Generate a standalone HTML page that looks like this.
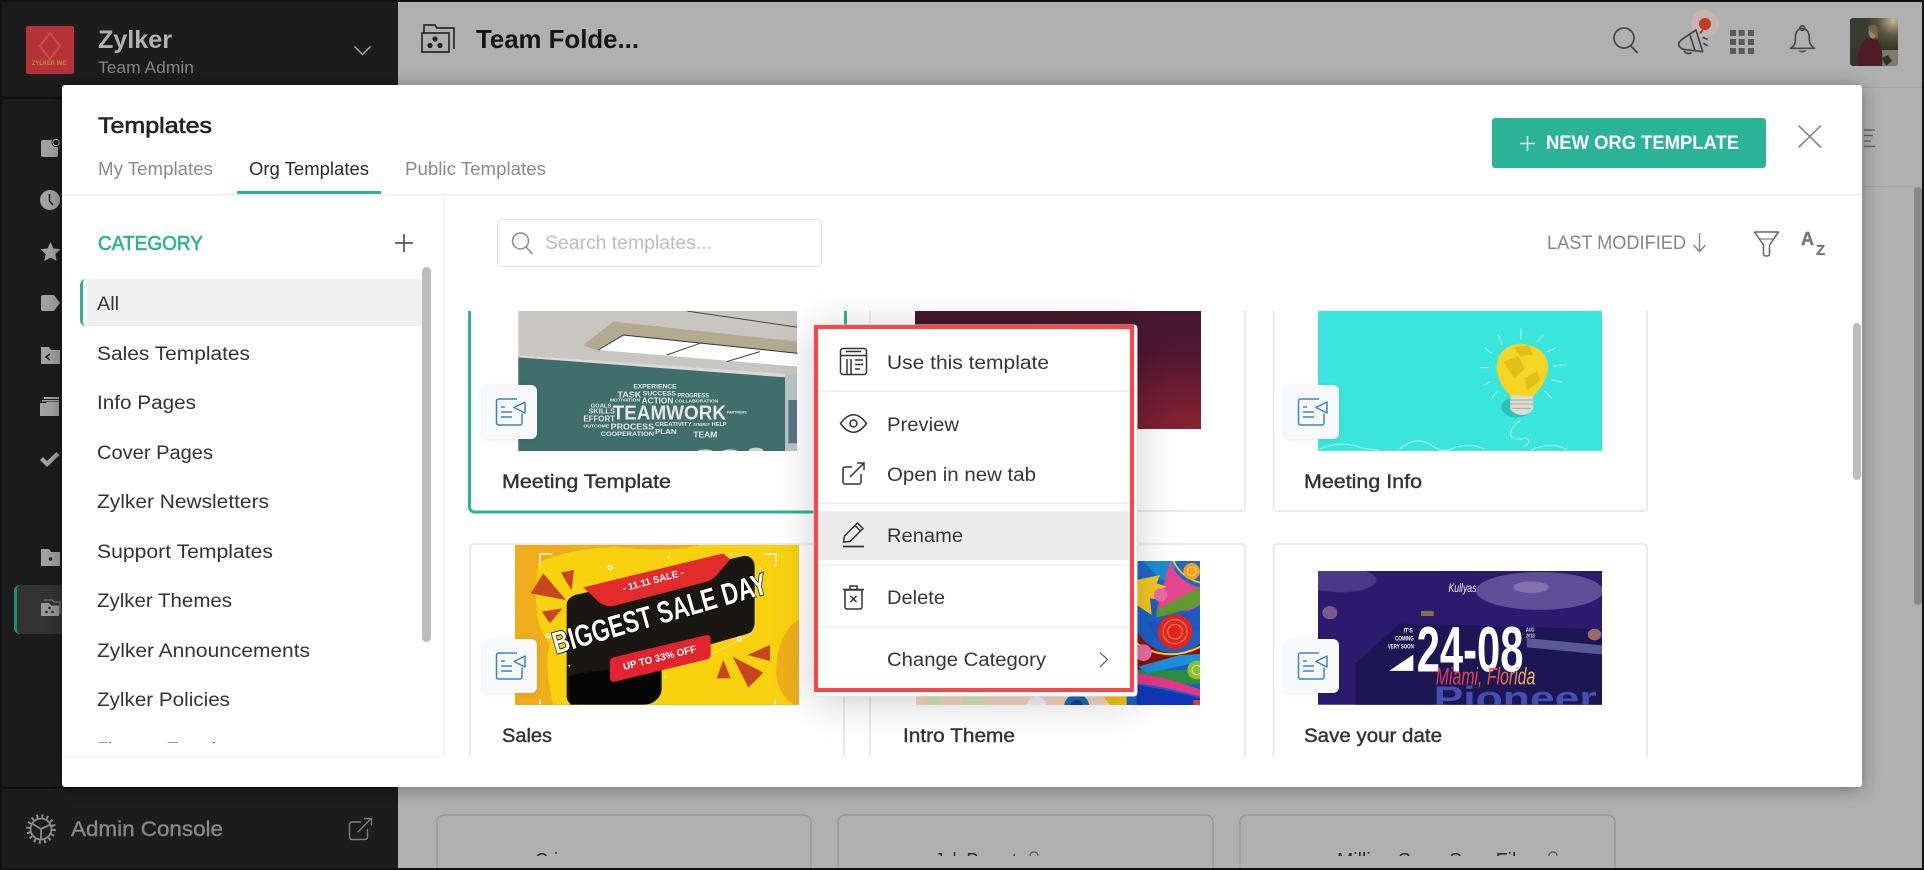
<!DOCTYPE html>
<html lang="en"><head><meta charset="utf-8"><title>Templates</title>
<style>
html,body{margin:0;padding:0;background:#b0b0b0;width:1924px;height:870px;overflow:hidden}
svg{display:block;position:absolute;left:0;top:0}
text{font-family:"Liberation Sans",sans-serif;white-space:pre}
.m{stroke-width:.6px}
.l{font-size:19.6px;fill:#333}
.i{font-size:19.6px;fill:#363636}
.c{font-size:19.6px;fill:#333;stroke:#333;stroke-width:.4px}
.w{fill:#e9e9e4;font-weight:bold}
</style></head><body>
<svg width="1924" height="870" viewBox="0 0 1924 870" xmlns="http://www.w3.org/2000/svg">
<defs>
<clipPath id="cg"><rect x="444" y="311" width="1408" height="446"/></clipPath>
<clipPath id="cb"><rect x="400" y="800" width="1500" height="56"/></clipPath>
<clipPath id="cl"><rect x="64" y="270" width="358" height="473"/></clipPath>
<clipPath id="i1"><rect x="518" y="311" width="279" height="140"/></clipPath>
<clipPath id="i2"><rect x="515" y="545" width="284" height="160"/></clipPath>
<clipPath id="i3"><rect x="1318" y="311" width="284" height="140"/></clipPath>
<clipPath id="i4"><rect x="1318" y="571" width="284" height="134"/></clipPath>
<clipPath id="i5"><rect x="916" y="561" width="284" height="144"/></clipPath>
<clipPath id="av"><rect x="1850" y="18" width="48" height="48" rx="3"/></clipPath>
<filter id="sm" x="-10%" y="-15%" width="120%" height="130%"><feDropShadow dx="0" dy="2" stdDeviation="9" flood-color="#000" flood-opacity=".35"/></filter>
<filter id="sb" x="-30%" y="-30%" width="160%" height="160%"><feDropShadow dx="0" dy="5" stdDeviation="20" flood-color="#000" flood-opacity=".2"/></filter>
<filter id="ss" x="-30%" y="-30%" width="160%" height="160%"><feDropShadow dx="0" dy="1" stdDeviation="3" flood-color="#000" flood-opacity=".08"/></filter>
<linearGradient id="gm" x1="0" x2="1" y1="0" y2="0"><stop offset="0" stop-color="#e8325a"/><stop offset=".6" stop-color="#e8504a"/><stop offset="1" stop-color="#eec86a"/></linearGradient>
<g id="tic">
<rect width="54" height="54" rx="6" fill="#f8f9fa" filter="url(#ss)"/>
<path d="M34 14H15.500a2 2 0 0 0-2 2V38a2 2 0 0 0 2 2H37a2 2 0 0 0 2-2V28.500" fill="none" stroke="#3d82c9" stroke-width="1.500"/>
<path d="M42 17L31 22.500L42 28Z" fill="none" stroke="#3d82c9" stroke-width="1.500" stroke-linejoin="round"/>
<path d="M18 22h4M18 27h11M18 32h11" fill="none" stroke="#3d82c9" stroke-width="1.500"/>
</g>
<radialGradient id="gd" cx="1" cy="1" r="1.100"><stop offset="0" stop-color="#8a2230"/><stop offset=".6" stop-color="#4f1732"/><stop offset="1" stop-color="#43182c"/></radialGradient>
<radialGradient id="ga" cx=".9" cy=".05" r=".6"><stop offset="0" stop-color="#c9b894"/><stop offset=".5" stop-color="#5e5844"/><stop offset="1" stop-color="#35352a"/></radialGradient>
</defs>

<!-- page background -->
<rect width="1924" height="870" fill="#b0b0b0"/>
<rect x="398" y="87" width="1526" height="1" fill="#a0a0a0"/>
<rect x="398" y="186" width="1526" height="1" fill="#a6a6a6"/>
<path d="M422 33h27v19h-27zM424 33v-8h11l2 3h17v21" fill="none" stroke="#2a2a2a" stroke-width="1.700"/>
<circle cx="435" cy="39" r="2.600" fill="#222"/><circle cx="430" cy="45.500" r="2.600" fill="#222"/><circle cx="440" cy="45.500" r="2.600" fill="#222"/>
<text x="476" y="48" font-size="26" font-weight="bold" fill="#151515" textLength="163" lengthAdjust="spacingAndGlyphs">Team Folde...</text>
<circle cx="1624" cy="38" r="10" fill="none" stroke="#444" stroke-width="1.700"/><path d="M1631 46l6.500 7" stroke="#444" stroke-width="1.700"/>
<g transform="translate(1660,10) scale(.33333)">
<circle cx="135" cy="42" r="42" fill="#c4b5b1"/>
<circle cx="135" cy="42" r="18" fill="#c03a26"/>
<path d="M120 70l8-10" stroke="#444" stroke-width="5"/>
<path d="M108 60L128 125L70 118Q55 112 56 100Q60 90 75 82ZM90 75L105 122M72 122Q80 135 95 128M128 82L143 88M130 100L143 108" fill="none" stroke="#444" stroke-width="5" stroke-linejoin="round"/>
<g fill="#5a5a5a"><rect x="210" y="60" width="18" height="18"/><rect x="236" y="60" width="18" height="18"/><rect x="264" y="60" width="18" height="18"/><rect x="210" y="87" width="18" height="18"/><rect x="236" y="87" width="18" height="18"/><rect x="264" y="87" width="18" height="18"/><rect x="210" y="114" width="18" height="18"/><rect x="236" y="114" width="18" height="18"/><rect x="264" y="114" width="18" height="18"/></g>
<path d="M392 115Q408 105 406 85Q406 57 427 55Q448 57 448 85Q447 105 464 115Z" fill="none" stroke="#4a4a4a" stroke-width="5" stroke-linejoin="round"/>
<circle cx="427" cy="54" r="7" fill="none" stroke="#4a4a4a" stroke-width="5"/>
<path d="M416 122q11 9 22 0" fill="#4a4a4a" stroke="#4a4a4a" stroke-width="3"/>
</g>
<g clip-path="url(#av)">
<rect x="1850" y="18" width="48" height="48" fill="url(#ga)"/>
<path d="M1850 18h20v30h-20z" fill="#3a3f30" opacity=".7"/>
<path d="M1878 50h20v16h-20z" fill="#7d7b68"/>
<path d="M1857 66Q1858 45 1867 38L1877 40Q1884 48 1882 66Z" fill="#4f1c25"/>
<ellipse cx="1873" cy="32" rx="4.500" ry="6.500" fill="#9c8868"/>
<path d="M1868 27q5-4 9 0l1 12-4-5q-5-2-6-7z" fill="#7c6546"/>
<path d="M1882 58l6-3 4 6-6 5z" fill="#33322a"/>
</g>
<path d="M1864 130h11M1864 135.500h9M1864 141h7M1864 146.500h11" stroke="#666" stroke-width="1.500"/>
<rect x="1914" y="187" width="8" height="418" rx="4" fill="#888"/>
<g fill="none" stroke="#999" stroke-width="1.500">
<rect x="437" y="815" width="374" height="70" rx="7"/>
<rect x="838" y="815" width="375" height="70" rx="7"/>
<rect x="1240" y="815" width="375" height="70" rx="7"/>
</g>
<g clip-path="url(#cb)" font-size="20" fill="#2a2a2a">
<text x="535" y="867" textLength="42" lengthAdjust="spacingAndGlyphs">Crisp</text>
<text x="935" y="867" textLength="90" lengthAdjust="spacingAndGlyphs">Job Reports</text>
<text x="1337" y="867" textLength="200" lengthAdjust="spacingAndGlyphs">Million Song Sour Files</text>
<rect x="1030" y="852" width="8" height="10" rx="3.500" fill="none" stroke="#444"/>
<rect x="1549" y="852" width="8" height="10" rx="3.500" fill="none" stroke="#444"/>
</g>

<!-- left sidebar -->
<rect x="0" y="0" width="398" height="870" fill="#1c1c1c"/>
<rect x="2" y="97" width="396" height="1.500" fill="#0c0c0c"/>
<rect x="26" y="26" width="48" height="48" rx="2" fill="#b5323a"/>
<path d="M50 33l10 13-10 13-10-13z" fill="none" stroke="#c9504b" stroke-width="2"/>
<text x="32" y="65" font-size="6.500" font-weight="bold" fill="#c98a2e" textLength="36" lengthAdjust="spacingAndGlyphs">ZYLKER INC.</text>
<text x="98" y="48" font-size="25" font-weight="bold" fill="#b2b2b2" textLength="74" lengthAdjust="spacingAndGlyphs">Zylker</text>
<text x="98" y="73" font-size="16.500" fill="#858585" textLength="96" lengthAdjust="spacingAndGlyphs">Team Admin</text>
<path d="M354.500 46.500l8 8 8-8" fill="none" stroke="#a8a8a8" stroke-width="1.500"/>
<g fill="#a2a2a2">
<rect x="41" y="140" width="17" height="17" rx="2"/>
<circle cx="56" cy="142.500" r="4.500" fill="#1c1c1c"/><circle cx="56" cy="142.500" r="3.200" fill="none" stroke="#a2a2a2" stroke-width="1"/>
<circle cx="50" cy="200" r="10"/><path d="M49.500 194v7l3.500 4" fill="none" stroke="#1c1c1c" stroke-width="1.500"/>
<path d="M50.500 242l3 6.500 7 .8-5.200 4.800 1.500 7-6.300-3.600-6.300 3.600 1.500-7-5.200-4.800 7-.8z"/>
<path d="M41 297a2 2 0 0 1 2-2h11l6 8-6 8H43a2 2 0 0 1-2-2z"/>
<path d="M41 347h8l2 3h9v14H41z"/><path d="M50 354l-4 3 4 3" fill="none" stroke="#1c1c1c" stroke-width="1.600"/>
<path d="M40 403h6l1-1h12v14H40z"/><rect x="44" y="397" width="15" height="2"/><rect x="42" y="400" width="17" height="1.500"/>
<path d="M40 460l3-3 4 4 9.500-9 3 3-12.500 12z"/>
<path d="M41 549h8l2 3h9v14H41z"/><circle cx="50.500" cy="559" r="1.800" fill="#1c1c1c"/>
</g>
<path d="M62 585H20a6 6 0 0 0-6 6v37a6 6 0 0 0 6 6h42z" fill="#333"/>
<path d="M20 585a6 6 0 0 0-6 6v37a6 6 0 0 0 6 6h1.500a4 4 0 0 1-4.500-4v-41a4 4 0 0 1 4.500-4z" fill="#1f8c74"/>
<path d="M41 603h8l2 2.500h8V616H41z" fill="#9a9a9a"/><path d="M44 600h8l2 2h6v12" fill="none" stroke="#8a8a8a"/>
<g fill="#333"><circle cx="49.500" cy="608" r="1.400"/><circle cx="46.500" cy="612" r="1.400"/><circle cx="52.500" cy="612" r="1.400"/></g>
<rect x="2" y="787" width="396" height="1.500" fill="#0d0d0d"/>
<g transform="translate(41,829)" fill="none" stroke="#8c8c8c">
<circle r="10.500" stroke-width="1.800"/>
<circle r="13" stroke-width="3.600" stroke-dasharray="2 3.105"/>
<path d="M0 0L-9-5.500M0 0L9.500-4.500M0 0V10" stroke-width="1.800"/>
</g>
<text x="71" y="836" font-size="21.500" fill="#878787" stroke="#878787" stroke-width=".4" textLength="152" lengthAdjust="spacingAndGlyphs">Admin Console</text>
<path d="M361 822h-9a2.500 2.500 0 0 0-2.500 2.500V837a2.500 2.500 0 0 0 2.500 2.500h13a2.500 2.500 0 0 0 2.500-2.500v-8M358 832l13-13.500M364 818.500h7.500v7" fill="none" stroke="#7e7e7e" stroke-width="1.400"/>

<!-- modal -->
<rect x="62" y="85" width="1800" height="702" rx="3" fill="#fff" filter="url(#sm)"/>
<text x="98" y="133" font-size="22.500" fill="#222" stroke="#222" class="m" textLength="114" lengthAdjust="spacingAndGlyphs">Templates</text>
<text x="98" y="175" font-size="18" fill="#8a8a8a" textLength="115" lengthAdjust="spacingAndGlyphs">My Templates</text>
<text x="249" y="175" font-size="18" fill="#2a2a2a" textLength="120" lengthAdjust="spacingAndGlyphs">Org Templates</text>
<text x="405" y="175" font-size="18" fill="#8a8a8a" textLength="141" lengthAdjust="spacingAndGlyphs">Public Templates</text>
<rect x="62" y="194" width="1800" height="1.500" fill="#eee"/>
<rect x="237" y="191" width="144" height="3" fill="#2ab394"/>
<rect x="1492" y="118" width="274" height="50" rx="3" fill="#2ab394"/>
<path d="M1527.500 136v15M1520 143.500h15" stroke="#d6f1ea" stroke-width="1.600"/>
<text x="1546" y="149" font-size="19" font-weight="bold" fill="#fff" textLength="193" lengthAdjust="spacingAndGlyphs">NEW ORG TEMPLATE</text>
<path d="M1798.500 125.500l22.500 22M1821 125.500l-22.500 22" stroke="#888" stroke-width="1.600"/>
<rect x="443" y="195" width="1" height="561" fill="#eee"/>
<rect x="62" y="756" width="381" height="1" fill="#eee"/>
<text x="98" y="250" font-size="20.500" fill="#2ab394" stroke="#2ab394" class="m" textLength="105" lengthAdjust="spacingAndGlyphs">CATEGORY</text>
<path d="M404 234v18M395 243h18" stroke="#555" stroke-width="1.700"/>
<path d="M87 279H420a2 2 0 0 1 2 2V324a2 2 0 0 1-2 2H87z" fill="#f0f0f0"/>
<path d="M86 279a6 6 0 0 0-6 6v35a6 6 0 0 0 6 6h1a4 4 0 0 1-4-4v-39a4 4 0 0 1 4-4z" fill="#2ab394"/>
<rect x="422" y="267" width="9" height="375" rx="4.500" fill="#bcbcbc"/>
<g clip-path="url(#cl)">
<text x="97" y="310" class="l" textLength="22" lengthAdjust="spacingAndGlyphs">All</text>
<text x="97" y="360" class="l" textLength="153" lengthAdjust="spacingAndGlyphs">Sales Templates</text>
<text x="97" y="409" class="l" textLength="99" lengthAdjust="spacingAndGlyphs">Info Pages</text>
<text x="97" y="459" class="l" textLength="116" lengthAdjust="spacingAndGlyphs">Cover Pages</text>
<text x="97" y="508" class="l" textLength="172" lengthAdjust="spacingAndGlyphs">Zylker Newsletters</text>
<text x="97" y="558" class="l" textLength="176" lengthAdjust="spacingAndGlyphs">Support Templates</text>
<text x="97" y="607" class="l" textLength="135" lengthAdjust="spacingAndGlyphs">Zylker Themes</text>
<text x="97" y="657" class="l" textLength="213" lengthAdjust="spacingAndGlyphs">Zylker Announcements</text>
<text x="97" y="706" class="l" textLength="133" lengthAdjust="spacingAndGlyphs">Zylker Policies</text>
<text x="97" y="756" class="l" textLength="154" lengthAdjust="spacingAndGlyphs">Finance Templates</text>
</g>
<rect x="497.500" y="219.500" width="324" height="47" rx="4" fill="#fff" stroke="#e2e2e2"/>
<circle cx="520.500" cy="241" r="8" fill="none" stroke="#8a8a8a" stroke-width="1.500"/><path d="M526 247l6.500 7" stroke="#8a8a8a" stroke-width="1.500"/>
<text x="545" y="249" font-size="19" fill="#bdbdbd" textLength="167" lengthAdjust="spacingAndGlyphs">Search templates...</text>
<text x="1547" y="249" font-size="19" fill="#858585" textLength="139" lengthAdjust="spacingAndGlyphs">LAST MODIFIED</text>
<path d="M1699.500 233v18M1693.500 245l6 6.500 6-6.500" fill="none" stroke="#858585" stroke-width="1.400"/>
<path d="M1754.500 232h24l-9 13v9q0 2-3 2-3 0-3-2v-9z" fill="none" stroke="#666" stroke-width="1.500" stroke-linejoin="round"/>
<path d="M1759 239h15" stroke="#666"/>
<text x="1801" y="245" font-size="18" font-weight="bold" fill="#777" stroke="#777" stroke-width=".4">A</text>
<text x="1816" y="255" font-size="15" font-weight="bold" fill="#777" stroke="#777" stroke-width=".3">Z</text>

<!-- template grid -->
<g clip-path="url(#cg)">
<g fill="#fff" stroke="#e3e3e3" stroke-width="1.500">
<rect x="870" y="250" width="375" height="261" rx="3"/>
<rect x="1273.500" y="250" width="373.500" height="261" rx="3"/>
<rect x="470" y="544" width="374" height="240" rx="3"/>
<rect x="870" y="544" width="375" height="240" rx="3"/>
<rect x="1273.500" y="544" width="373.500" height="240" rx="3"/>
</g>
<rect x="469.500" y="250" width="376" height="262" rx="5" fill="#fff" stroke="#2ab394" stroke-width="3"/>

<!-- image: teamwork -->
<g clip-path="url(#i1)"><g transform="translate(460,300) scale(.33333)">
<rect x="175" y="33" width="840" height="420" fill="#c9c5c0"/>
<path d="M175 165L975 225H1015V453H175Z" fill="#3f6e6d"/>
<path d="M175 165L975 222V232L175 172Z" fill="#dcdad6"/>
<path d="M370 135L460 65L1015 125V170L410 152Z" fill="#b3aa90"/>
<path d="M415 150L490 105L1015 160V200Z" fill="#fff"/>
<path d="M490 105L1015 160M415 150L490 105" fill="none" stroke="#333" stroke-width="3"/>
<path d="M680 33L1015 82M620 165L720 130M800 185L900 155" stroke="#444" stroke-width="3"/>
<rect x="975" y="225" width="40" height="228" fill="#b8c4c8"/><rect x="985" y="300" width="27" height="130" fill="#5b7786"/>
<ellipse cx="735" cy="454" rx="22" ry="6" fill="#cfd4c8"/><ellipse cx="810" cy="454" rx="22" ry="6" fill="#cfd4c8"/><ellipse cx="888" cy="452" rx="22" ry="9" fill="#cfd4c8"/>
<text x="520" y="265" font-size="20" class="w" textLength="130" lengthAdjust="spacingAndGlyphs">EXPERIENCE</text>
<text x="472" y="292" font-size="24" class="w" textLength="72" lengthAdjust="spacingAndGlyphs">TASK</text>
<text x="548" y="287" font-size="20" class="w" textLength="100" lengthAdjust="spacingAndGlyphs">SUCCESS</text>
<text x="652" y="292" font-size="18" class="w" textLength="95" lengthAdjust="spacingAndGlyphs">PROGRESS</text>
<text x="450" y="305" font-size="13" class="w" textLength="90" lengthAdjust="spacingAndGlyphs">MOTIVATION</text>
<text x="545" y="310" font-size="26" class="w" textLength="95" lengthAdjust="spacingAndGlyphs">ACTION</text>
<text x="645" y="308" font-size="14" class="w" textLength="130" lengthAdjust="spacingAndGlyphs">COLLABORATION</text>
<text x="392" y="322" font-size="16" class="w" textLength="62" lengthAdjust="spacingAndGlyphs">GOALS</text>
<text x="385" y="341" font-size="22" class="w" textLength="80" lengthAdjust="spacingAndGlyphs">SKILLS</text>
<text x="458" y="358" font-size="62" class="w" textLength="340" lengthAdjust="spacingAndGlyphs">TEAMWORK</text>
<text x="370" y="364" font-size="24" class="w" textLength="95" lengthAdjust="spacingAndGlyphs">EFFORT</text>
<text x="370" y="382" font-size="14" class="w" textLength="78" lengthAdjust="spacingAndGlyphs">OUTCOME</text>
<text x="452" y="388" font-size="26" class="w" textLength="130" lengthAdjust="spacingAndGlyphs">PROCESS</text>
<text x="585" y="378" font-size="16" class="w" textLength="110" lengthAdjust="spacingAndGlyphs">CREATIVITY</text>
<text x="700" y="378" font-size="13" class="w" textLength="50" lengthAdjust="spacingAndGlyphs">SYNERGY</text>
<text x="755" y="378" font-size="16" class="w" textLength="45" lengthAdjust="spacingAndGlyphs">HELP</text>
<text x="800" y="340" font-size="11" class="w" textLength="60" lengthAdjust="spacingAndGlyphs">PARTNERS</text>
<text x="422" y="408" font-size="20" class="w" textLength="160" lengthAdjust="spacingAndGlyphs">COOPERATION</text>
<text x="585" y="402" font-size="22" class="w" textLength="65" lengthAdjust="spacingAndGlyphs">PLAN</text>
<text x="700" y="413" font-size="26" class="w" textLength="72" lengthAdjust="spacingAndGlyphs">TEAM</text>
</g></g>

<!-- image: dark red -->
<rect x="915" y="311" width="286" height="118" fill="url(#gd)"/>

<!-- image: light bulb -->
<g clip-path="url(#i3)"><g transform="translate(1260,300) scale(.42355,.36364)">
<rect x="136" y="30" width="672" height="385" fill="#3ae6dc"/>
<g stroke="#b9f3ea" stroke-width="2.500" fill="none">
<path d="M562 95l10 28M616 78v30M670 95l-16 20M698 132l-20 10M722 177l-30 5M714 226l-25-6M688 270l-16-20M531 132l18 16M521 186h20M528 235l15-10M548 270l12-20"/>
<path d="M615 330q-30 30-22 45 10 12 35 5 15 5-5 25M140 410q40-20 80-10 30 12 60 12M330 410q30-35 70-15 30 30 60 10 40-12 70 5M640 412q50-25 85 0"/>
</g>
<ellipse cx="605" cy="295" rx="35" ry="28" fill="#2fc0b6"/>
<path d="M591 258h54v42q-10 16-27 16-17 0-27-16z" fill="#dcdcd0"/>
<path d="M591 275h54M591 286h54M596 298h44" stroke="#a8a8a0" stroke-width="3"/>
<path d="M612 120Q560 130 559 185Q560 225 590 262L645 264Q680 225 680 180Q675 125 612 120Z" fill="#f4d524"/>
<path d="M575 170l35-15 15 35-25 25zM625 215l30-20 6 25-30 30zM600 130l35-5 10 25-30 5z" fill="#e2be18"/>
</g></g>

<!-- image: sale -->
<g clip-path="url(#i2)"><g transform="translate(460,530) scale(.33333)">
<rect x="165" y="45" width="852" height="480" fill="#efac1b"/>
<path d="M235 100Q300 60 470 50Q620 70 720 45H1017V270Q960 300 950 400Q940 480 1000 524H280Q250 400 270 340Q210 280 235 100Z" fill="#f8d10f"/>
<path d="M1017 270Q960 310 955 400Q955 480 1017 524Z" fill="#f0ad1c"/>
<path d="M320 225Q320 205 345 195L850 78Q885 75 885 110V280Q885 305 860 312L605 385V480Q600 515 560 520L345 524Q322 524 320 500Z" fill="#1a1612"/>
<path d="M325 440Q360 425 450 420L600 420V480Q595 524 550 524H330Z" fill="#050507"/>
<path d="M370 172L790 70L810 88L775 130Q760 150 730 158L460 228Q430 232 410 210Z" fill="#e32b2c"/>
<path d="M450 395Q450 385 460 382L740 315Q752 315 752 325V375Q752 385 740 388L465 455Q452 458 450 445Z" fill="#e1242e"/>
<text transform="translate(490,185) rotate(-15)" font-size="29" font-weight="bold" fill="#fff" textLength="190" lengthAdjust="spacingAndGlyphs">- 11.11 SALE -</text>
<text transform="translate(288,372) rotate(-16)" font-size="92" font-weight="bold" fill="#fff" stroke="#000" stroke-width="5" paint-order="stroke" textLength="665" lengthAdjust="spacingAndGlyphs">BIGGEST SALE DAY</text>
<text transform="translate(492,420) rotate(-14)" font-size="30" font-weight="bold" fill="#fff" textLength="225" lengthAdjust="spacingAndGlyphs">UP TO 33% OFF</text>
<g fill="#c9451f">
<path d="M212 190L250 130L318 210Z"/><path d="M303 128L342 120L335 182Z"/><path d="M245 245L307 235L270 280Z"/>
<path d="M790 390L812 445H770Z"/><path d="M818 380L910 428L865 473Z"/><path d="M862 375L930 345V393Z"/>
</g>
<g fill="none" stroke="#f3ead0" stroke-width="5">
<path d="M277 72H240V108M910 72H948V108M240 524V508M945 524V508"/>
<circle cx="451" cy="113" r="6"/><circle cx="265" cy="317" r="6"/><circle cx="838" cy="327" r="6"/>
<path d="M806 75Q880 60 885 110V280Q880 310 860 320L755 372" stroke-width="3" opacity=".6"/>
</g>
<text x="618" y="88" font-size="22" fill="#fff">+</text><text x="896" y="122" font-size="22" fill="#fff">+</text><text x="610" y="446" font-size="22" fill="#fff">+</text><text x="322" y="414" font-size="20" fill="#fff">+</text>
</g></g>

<!-- image: colourful theme -->
<g clip-path="url(#i5)"><g transform="translate(880,530) scale(.33333)">
<rect x="107" y="93" width="855" height="432" fill="#1d5fc4"/>
<rect x="107" y="490" width="600" height="35" fill="#f4d5c0"/>
<circle cx="160" cy="515" r="20" fill="#cfe6b0"/><circle cx="280" cy="520" r="36" fill="#d3e3b4"/><circle cx="470" cy="530" r="30" fill="#f2f2ff"/>
<circle cx="590" cy="530" r="38" fill="#156fb2"/><circle cx="590" cy="530" r="20" fill="#1c3d8c"/>
<path d="M670 498h70v27h-50z" fill="#f1c40f"/>
<rect x="770" y="93" width="190" height="90" fill="#1f66c7"/>
<path d="M790 93q40 50 80 70l20-70z" fill="#1a8ecf"/>
<path d="M870 93q20 60 90 80v70L830 240 850 170z" fill="#e6458e"/>
<path d="M880 93q25 50 80 65" fill="none" stroke="#f5d10e" stroke-width="5"/>
<path d="M770 150l70 -15 -10 25 30 10-35 15 25 25-40-5 5 50-45-30z" fill="#f3c81f"/>
<circle cx="935" cy="124" r="25" fill="#f2a21d"/><circle cx="935" cy="124" r="13" fill="none" stroke="#ffd36a" stroke-width="3"/>
<circle cx="842" cy="195" r="20" fill="#ea6aa8"/>
<path d="M830 240Q900 200 962 170V225Q900 245 830 262Z" fill="#5e9a30"/>
<path d="M800 275Q880 270 962 225V300L830 330Z" fill="#1c57c4"/>
<circle cx="885" cy="305" r="52" fill="#e5241a"/>
<circle cx="885" cy="305" r="36" fill="none" stroke="#f5897a" stroke-width="3"/><circle cx="885" cy="305" r="22" fill="none" stroke="#f5897a" stroke-width="3"/>
<path d="M770 300Q800 360 880 372Q935 365 962 340V400L770 420Z" fill="#8d0e12"/>
<path d="M770 340Q860 400 962 350" fill="none" stroke="#f5d10e" stroke-width="6"/>
<circle cx="790" cy="368" r="25" fill="#ee6da2"/>
<path d="M770 420H962V462H770Z" fill="#2b8e3f"/>
<path d="M775 410L900 375 962 372V395L800 430Z" fill="#1b8fdc"/>
<circle cx="950" cy="420" r="28" fill="#8cc030"/><circle cx="950" cy="420" r="14" fill="none" stroke="#dbe98a" stroke-width="3"/>
<path d="M770 430Q860 440 962 480V500Q860 470 770 460Z" fill="#e6368a"/>
<path d="M770 465Q870 480 962 505V525H770Z" fill="#1037b8"/>
<rect x="940" y="510" width="22" height="15" fill="#e03a30"/>
</g></g>

<!-- image: save the date -->
<g clip-path="url(#i4)"><g transform="translate(1260,300) scale(.42355,.36364)">
<rect x="136" y="745" width="672" height="368" fill="#2b1a6e"/>
<ellipse cx="660" cy="800" rx="150" ry="52" fill="#5f4e98"/><ellipse cx="640" cy="790" rx="42" ry="16" fill="#8373ac"/>
<ellipse cx="190" cy="770" rx="85" ry="34" fill="#493a88"/>
<path d="M225 1000L330 890L808 905V1113H225Z" fill="#1d1654"/>
<path d="M630 930L808 950V975L630 955Z" fill="#5a5a96"/>
<circle cx="165" cy="860" r="18" fill="#7a5a8a"/><circle cx="790" cy="920" r="16" fill="#9a6a6a"/><rect x="380" y="855" width="30" height="14" fill="#8a6a50"/>
<text x="445" y="803" font-size="34" font-style="italic" fill="#f0f0f0" textLength="66" lengthAdjust="spacingAndGlyphs">Kullyas</text>
<text x="339" y="915" font-size="18" font-weight="bold" fill="#f2f2f2" textLength="22" lengthAdjust="spacingAndGlyphs">IT'S</text>
<text x="319" y="937" font-size="18" font-weight="bold" fill="#f2f2f2" textLength="44" lengthAdjust="spacingAndGlyphs">COMING</text>
<text x="302" y="958" font-size="18" font-weight="bold" fill="#f2f2f2" textLength="61" lengthAdjust="spacingAndGlyphs">VERY SOON</text>
<path d="M305 1020L362 975V1020Z" fill="#fff"/>
<text x="410" y="1125" font-size="88" font-weight="bold" fill="#4251b0" textLength="385" lengthAdjust="spacingAndGlyphs">Pioneer</text>
<text x="370" y="1022" font-size="176" font-weight="bold" fill="#fff" textLength="252" lengthAdjust="spacingAndGlyphs">24-08</text>
<text x="628" y="912" font-size="16" font-weight="bold" fill="#ddd" textLength="20" lengthAdjust="spacingAndGlyphs">AUG</text>
<text x="628" y="928" font-size="16" font-weight="bold" fill="#ddd" textLength="20" lengthAdjust="spacingAndGlyphs">2018</text>
<text x="415" y="1058" font-size="66" font-style="italic" fill="url(#gm)" textLength="235" lengthAdjust="spacingAndGlyphs">Miami, Florida</text>
</g></g>

<use href="#tic" x="483" y="385"/>
<use href="#tic" x="1285" y="385"/>
<use href="#tic" x="483" y="639"/>
<use href="#tic" x="1285" y="639"/>
<text x="502" y="488" class="c" textLength="169" lengthAdjust="spacingAndGlyphs">Meeting Template</text>
<text x="1304" y="488" class="c" textLength="118" lengthAdjust="spacingAndGlyphs">Meeting Info</text>
<text x="502" y="742" class="c" textLength="50" lengthAdjust="spacingAndGlyphs">Sales</text>
<text x="903" y="742" class="c" textLength="112" lengthAdjust="spacingAndGlyphs">Intro Theme</text>
<text x="1304" y="742" class="c" textLength="138" lengthAdjust="spacingAndGlyphs">Save your date</text>
</g>
<rect x="1853" y="323" width="8" height="157" rx="4" fill="#bcbcbc"/>

<!-- context menu -->
<rect x="814" y="325" width="323" height="371" rx="3" fill="#fff" filter="url(#sb)"/>
<rect x="814" y="325" width="323" height="371" rx="3" fill="none" stroke="#e6e6e6"/>
<g fill="#eee"><rect x="818" y="390.500" width="319" height="1.500"/><rect x="818" y="502.500" width="319" height="1.500"/><rect x="818" y="564.500" width="319" height="1.500"/><rect x="818" y="626.500" width="319" height="1.500"/></g>
<rect x="818" y="511" width="312" height="49" fill="#ececec"/>
<g fill="none" stroke="#333" stroke-width="1.500">
<rect x="840.500" y="348.500" width="26" height="26" rx="2.500"/>
<path d="M840.500 355.500h26M846 351.500h15M847 359v15.500M851 359v15.500M855 360h8M855 364.500h8M855 369h5"/>
<path d="M840.500 423.500Q853.500 406 866.500 423.500Q853.500 441 840.500 423.500Z"/><circle cx="853.500" cy="423.500" r="3.500"/>
<path d="M852 467h-7a2 2 0 0 0-2 2v13a2 2 0 0 0 2 2h14a2 2 0 0 0 2-2v-8M850 477l14-14M857 463h7v7"/>
<path d="M843.500 542l1-6 13-13 5.500 5.500-13 13zM855 525.500l5 5"/>
<path d="M843 546.500h21" stroke-width="1.800"/>
<path d="M845 590h17v17a2 2 0 0 1-2 2h-13a2 2 0 0 1-2-2zM843 589.500h21M850 589.500v-3.500h7v3.500M850.500 596l6 6M856.500 596l-6 6"/>
</g>
<path d="M1100 652.500l7.500 7-7.500 7.500" fill="none" stroke="#666" stroke-width="1.300"/>
<text x="887" y="369" class="i" textLength="162" lengthAdjust="spacingAndGlyphs">Use this template</text>
<text x="887" y="431" class="i" textLength="72" lengthAdjust="spacingAndGlyphs">Preview</text>
<text x="887" y="481" class="i" textLength="149" lengthAdjust="spacingAndGlyphs">Open in new tab</text>
<text x="887" y="542" class="i" textLength="76" lengthAdjust="spacingAndGlyphs">Rename</text>
<text x="887" y="604" class="i" textLength="58" lengthAdjust="spacingAndGlyphs">Delete</text>
<text x="887" y="666" class="i" textLength="159" lengthAdjust="spacingAndGlyphs">Change Category</text>
<rect x="816" y="327" width="316" height="363" fill="none" stroke="#ff4444" stroke-width="4"/>

<!-- screenshot frame -->
<rect x="1" y="1" width="1922" height="868" fill="none" stroke="#111" stroke-width="2"/>
</svg>
</body></html>
